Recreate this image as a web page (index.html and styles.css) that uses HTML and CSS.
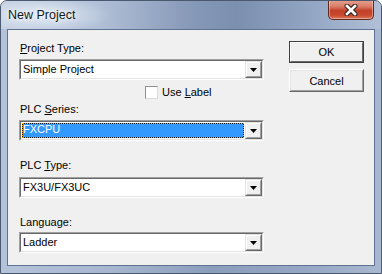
FILE: index.html
```html
<!DOCTYPE html>
<html>
<head>
<meta charset="utf-8">
<link rel="stylesheet" href="styles.css">
</head>
<body>
<div class="window">
  <div class="titlebar">
    <span class="title">New Project</span>
    <div class="close">
      <svg width="14" height="12" viewBox="0 0 14 12">
        <path d="M3 2 L11 10 M11 2 L3 10" stroke="#3b2420" stroke-width="5" stroke-linecap="round" fill="none"/>
        <path d="M3 2 L11 10 M11 2 L3 10" stroke="#ffffff" stroke-width="2.6" stroke-linecap="square" fill="none"/>
      </svg>
    </div>
  </div>
  <div class="client">
    <div class="form">
      <div class="lbl l1"><u>P</u>roject Type:</div>
      <div class="combo c1"><div class="inner"><span class="val">Simple Project</span><span class="drop"><span class="drop-in"><svg width="7" height="4" viewBox="0 0 7 4"><path d="M0 0H7L3.5 4Z" fill="#000"/></svg></span></span></div></div>
      <div class="check-row"><span class="box"></span><span class="check-text">Use <u>L</u>abel</span></div>
      <div class="lbl l2">PLC <u>S</u>eries:</div>
      <div class="combo c2"><div class="inner"><span class="val sel"><span class="sel-in">FXCPU</span></span><span class="drop"><span class="drop-in"><svg width="7" height="4" viewBox="0 0 7 4"><path d="M0 0H7L3.5 4Z" fill="#000"/></svg></span></span></div></div>
      <div class="lbl l3">PLC <u>T</u>ype:</div>
      <div class="combo c3"><div class="inner"><span class="val">FX3U/FX3UC</span><span class="drop"><span class="drop-in"><svg width="7" height="4" viewBox="0 0 7 4"><path d="M0 0H7L3.5 4Z" fill="#000"/></svg></span></span></div></div>
      <div class="lbl l4">Langua<u>g</u>e:</div>
      <div class="combo c4"><div class="inner"><span class="val">Ladder</span><span class="drop"><span class="drop-in"><svg width="7" height="4" viewBox="0 0 7 4"><path d="M0 0H7L3.5 4Z" fill="#000"/></svg></span></span></div></div>
    </div>
    <div class="buttons">
      <div class="btn default"><div class="btn-in"><div class="btn-in2">OK</div></div></div>
      <div class="btn cancel"><div class="btn-in"><div class="btn-in2">Cancel</div></div></div>
    </div>
  </div>
</div>
</body>
</html>
```

FILE: styles.css
```css
html, body {
  margin: 0;
  padding: 0;
  background: #ffffff;
}

.window {
  box-sizing: border-box;
  width: 382px;
  height: 274px;
  border: 1px solid #4a5870;
  border-radius: 7px 7px 0 0;
  background: linear-gradient(90deg, #b4c3da 0%, #a6b6cf 30%, #8a9dbb 55%, #95a7c4 80%, #a9b8d0 100%);
  display: flex;
  flex-direction: column;
  overflow: hidden;
  font-family: "Liberation Sans", Arial, sans-serif;
}

.titlebar {
  height: 28px;
  display: flex;
  align-items: flex-start;
  background:
    radial-gradient(ellipse 70px 18px at 40px 14px, rgba(235, 241, 249, 0.85), rgba(235, 241, 249, 0) 100%),
    linear-gradient(90deg, #c3d0e2 0%, #b2c1d8 25%, #8799b8 50%, #7b8fae 62%, #93a6c4 82%, #b1c0d7 100%);
}

.title {
  margin-left: 7px;
  margin-top: 6px;
  font-size: 12.5px;
  line-height: 16px;
  color: #101820;
  text-shadow: 0 0 6px rgba(255, 255, 255, 0.9), 0 0 3px rgba(255, 255, 255, 0.8);
}

.close {
  box-sizing: border-box;
  margin-left: auto;
  margin-right: 7px;
  margin-top: -1px;
  width: 46px;
  height: 20px;
  border: 1px solid #5e2a22;
  border-top: none;
  border-radius: 0 0 5px 5px;
  background: linear-gradient(180deg, #e3a290 0%, #d97c66 35%, #c2412a 55%, #c8482f 80%, #dc7b5d 100%);
  box-shadow: inset 0 0 0 1px rgba(255, 220, 210, 0.45);
  display: flex;
  align-items: center;
  justify-content: center;
}

.close svg {
  display: block;
  margin-top: 1px;
}

.client {
  box-sizing: border-box;
  height: 237px;
  margin: 0 6px 7px 6px;
  border: 1px solid #5f7291;
  background: #f0f0f0;
  display: flex;
  align-items: flex-start;
  padding: 12px 0 0 11px;
  font-size: 11px;
  color: #000;
}

.form {
  width: 245px;
  display: flex;
  flex-direction: column;
}

.lbl {
  height: 13px;
  line-height: 13px;
  padding-left: 1px;
  white-space: nowrap;
}

.l2 { margin-top: 4px; }
.l3 { margin-top: 18px; }
.l4 { margin-top: 18px; }

.combo {
  box-sizing: border-box;
  height: 21px;
  margin-top: 4px;
  border: 1px solid;
  border-color: #a0a0a0 #ffffff #ffffff #a0a0a0;
  background: #fff;
}

.c3 { margin-top: 5px; }
.c4 { margin-top: 3px; }

.combo .inner {
  box-sizing: border-box;
  height: 100%;
  border: 1px solid;
  border-color: #696969 #e3e3e3 #e3e3e3 #696969;
  display: flex;
  background: #fff;
}

.val {
  flex: 1;
  padding-left: 2px;
  line-height: 17px;
  white-space: nowrap;
}

.val.sel {
  padding: 1px 1px 1px 1px;
  display: flex;
}

.sel-in {
  flex: 1;
  background: #3399ff;
  color: #fff;
  line-height: 13px;
  padding-left: 1px;
  outline: 1px dotted #ff9a00;
  outline-offset: -1px;
  box-shadow: inset 0 0 0 1px #1a1a1a;
}

.drop {
  box-sizing: border-box;
  width: 17px;
  height: 17px;
  border: 1px solid;
  border-color: #e3e3e3 #696969 #696969 #e3e3e3;
  background: #f0f0f0;
}

.drop-in {
  box-sizing: border-box;
  display: flex;
  align-items: center;
  justify-content: center;
  width: 100%;
  height: 100%;
  border: 1px solid;
  border-color: #ffffff #a0a0a0 #a0a0a0 #ffffff;
}

.drop-in svg {
  display: block;
  margin-top: 1px;
}

.check-row {
  display: flex;
  align-items: center;
  margin-top: 6px;
  margin-left: 126px;
  height: 13px;
}

.box {
  box-sizing: border-box;
  width: 13px;
  height: 13px;
  border: 1px solid;
  border-color: #8f8f8f #dcdcdc #dcdcdc #8f8f8f;
  background: #fff;
}

.check-text {
  margin-left: 4px;
  line-height: 13px;
}

.buttons {
  margin-left: 25px;
  margin-top: -1px;
  display: flex;
  flex-direction: column;
  gap: 6px;
}

.btn {
  box-sizing: border-box;
  width: 75px;
  height: 22px;
  border: 1px solid;
  border-color: #ffffff #696969 #696969 #ffffff;
  background: #f0f0f0;
}

.btn.default {
  border-color: #404040;
}

.btn-in {
  box-sizing: border-box;
  height: 100%;
  border: 1px solid;
  border-color: #e3e3e3 #a0a0a0 #a0a0a0 #e3e3e3;
}

.btn.default .btn-in {
  border-color: #ffffff #696969 #696969 #ffffff;
}

.btn-in2 {
  height: 100%;
  display: flex;
  align-items: center;
  justify-content: center;
  line-height: 13px;
}

.btn.cancel {
  height: 23px;
}

.btn.cancel .btn-in2 {
  padding-top: 1px;
  box-sizing: border-box;
}
```
